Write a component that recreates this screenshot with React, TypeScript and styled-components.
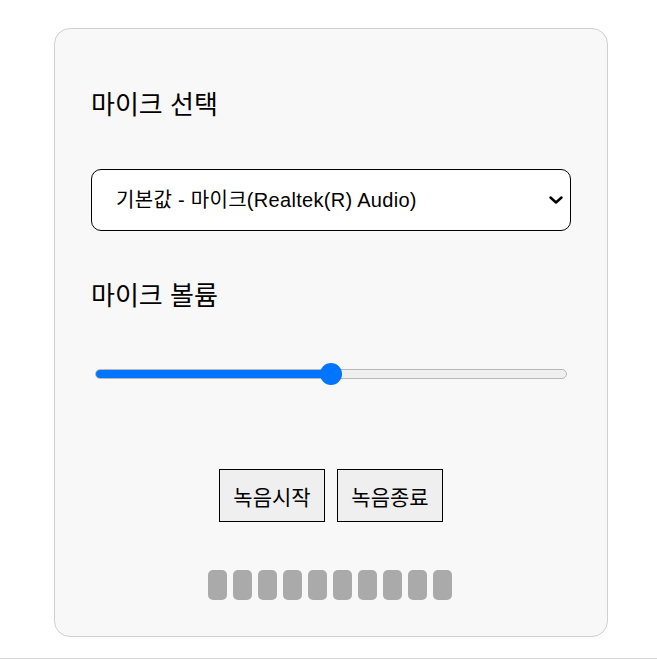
import React, { useState } from "react";
import styled, { createGlobalStyle } from "styled-components";

const FONT = `"Liberation Sans", "Noto Sans CJK KR", Arial, sans-serif`;

const GlobalStyle = createGlobalStyle`
  html, body {
    margin: 0;
    padding: 0;
    background: #ffffff;
    font-family: ${FONT};
  }
`;

const Page = styled.div`
  padding-top: 28px;
  padding-left: 54px;
`;

const Card = styled.div`
  width: 554px;
  height: 609px;
  box-sizing: border-box;
  background: #f8f8f8;
  border: 1px solid #d0d0d0;
  border-radius: 16px;
  padding: 0 36px;
  display: flex;
  flex-direction: column;
`;

const Label = styled.div<{ $top: number }>`
  margin-top: ${(p) => p.$top}px;
  font-size: 26px;
  line-height: 30px;
  color: #000;
`;

const SelectWrap = styled.div`
  position: relative;
  margin-top: 49px;
  width: 480px;
  height: 62px;
`;

const Select = styled.select`
  -webkit-appearance: none;
  appearance: none;
  width: 100%;
  height: 100%;
  box-sizing: border-box;
  border: 1px solid #000;
  border-radius: 10px;
  background: #fff;
  padding: 0 40px 0 24px;
  font-family: ${FONT};
  font-size: 20px;
  letter-spacing: 0.3px;
  color: #000;
  outline: none;
`;

const Chevron = styled.svg`
  position: absolute;
  right: 8px;
  top: 27px;
  width: 14px;
  height: 8px;
  pointer-events: none;
`;

const Range = styled.input`
  -webkit-appearance: none;
  appearance: none;
  margin: 58px 0 0 4px;
  width: 472px;
  height: 10px;
  border-radius: 5px;
  border: 1px solid #b8b8b8;
  box-sizing: border-box;
  outline: none;

  &::-webkit-slider-thumb {
    -webkit-appearance: none;
    width: 22px;
    height: 22px;
    border-radius: 50%;
    background: #0075ff;
    border: none;
  }
`;

const ButtonRow = styled.div`
  margin-top: 90px;
  display: flex;
  justify-content: center;
  gap: 12px;
`;

const Button = styled.button`
  width: 106px;
  height: 53px;
  background: #efefef;
  border: 1px solid #000;
  border-radius: 0;
  font-family: ${FONT};
  font-size: 21px;
  color: #000;
  padding: 0;
`;

const Meter = styled.div`
  margin-top: 48px;
  display: flex;
  justify-content: center;
  gap: 6px;
  padding-right: 2px;
`;

const Bar = styled.div`
  width: 19px;
  height: 30px;
  border-radius: 5px;
  background: #aaaaaa;
`;

const Footer = styled.div`
  margin-top: 21px;
  border-top: 1px solid #d8d8d8;
  height: 10px;
`;

export default function App() {
  const [volume, setVolume] = useState(50);
  const pct = volume;
  return (
    <>
      <GlobalStyle />
      <Page>
        <Card>
          <Label $top={61}>마이크 선택</Label>
          <SelectWrap>
            <Select defaultValue="default">
              <option value="default">기본값 - 마이크(Realtek(R) Audio)</option>
            </Select>
            <Chevron viewBox="0 0 14 8">
              <path d="M1.5 1.5 L7 6.5 L12.5 1.5" fill="none" stroke="#000" strokeWidth="2.4" strokeLinecap="round" strokeLinejoin="round" />
            </Chevron>
          </SelectWrap>
          <Label $top={50}>마이크 볼륨</Label>
          <Range
            type="range"
            min={0}
            max={100}
            value={volume}
            onChange={(e) => setVolume(Number(e.target.value))}
            style={{
              background: `linear-gradient(to right, #0075ff 0%, #0075ff ${pct}%, #efefef ${pct}%, #efefef 100%)`,
            }}
          />
          <ButtonRow>
            <Button>녹음시작</Button>
            <Button>녹음종료</Button>
          </ButtonRow>
          <Meter>
            {Array.from({ length: 10 }).map((_, i) => (
              <Bar key={i} />
            ))}
          </Meter>
        </Card>
      </Page>
      <Footer />
    </>
  );
}
